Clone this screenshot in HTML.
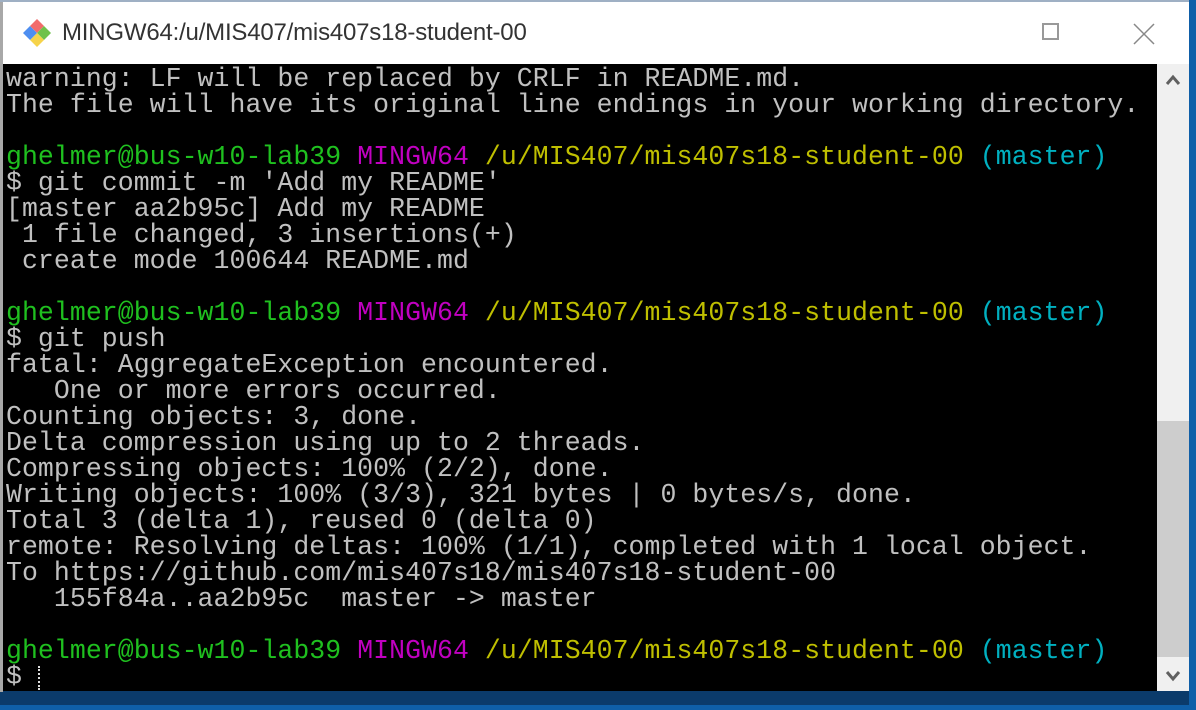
<!DOCTYPE html>
<html><head><meta charset="utf-8"><style>
html,body{margin:0;padding:0;width:1196px;height:710px;overflow:hidden;background:#fff;}
#win{position:absolute;left:0;top:0;width:1196px;height:710px;background:#0b3b6b;}
#lb{position:absolute;left:0;top:0;width:3px;height:692px;background:#a8a8a8;}
#tb{position:absolute;left:0;top:0;width:1190px;height:2px;background:#9fb0c4;}
#rb{position:absolute;left:1189px;top:0;width:7px;height:710px;background:#0f5fa8;}
#bb{position:absolute;left:0;top:705px;width:1196px;height:5px;background:#0f5fa8;}
#title{position:absolute;left:3px;top:2px;width:1186px;height:62px;background:#fff;}
#title .t{position:absolute;left:59px;top:17px;font:24px "Liberation Sans",sans-serif;color:#333;letter-spacing:-0.2px;}
#term{position:absolute;left:3px;top:64px;width:1154px;height:627px;background:#000;}
pre{margin:0;position:absolute;left:3px;top:2px;font:26.5px/26px "Liberation Mono",monospace;color:#c0c0c0;letter-spacing:0.06px;}
.g{color:#1fc01f}.m{color:#c000c0}.y{color:#bfbf00}.c{color:#00b0c0}
#sb{position:absolute;left:1157px;top:64px;width:32px;height:627px;background:#f0f0f0;}
#thumb{position:absolute;left:1157px;top:421px;width:32px;height:236px;background:#cdcdcd;}
</style></head><body><div id="win">
<div id="title">
<svg style="position:absolute;left:18px;top:14px" width="32" height="32" viewBox="0 0 32 32">
<polygon points="16,3 23,10 16,17 9,10" fill="#f26b6b"/>
<polygon points="23,10 30,17 23,24 16,17" fill="#6fc24a"/>
<polygon points="16,17 23,24 16,31 9,24" fill="#f6d34a"/>
<polygon points="9,10 16,17 9,24 2,17" fill="#4e8ef0"/>
</svg>
<div class="t">MINGW64:/u/MIS407/mis407s18-student-00</div>
<div style="position:absolute;left:1039px;top:21px;width:17px;height:17px;border:2px solid #999;box-sizing:border-box"></div>
<svg style="position:absolute;left:1130px;top:21px" width="22" height="22" viewBox="0 0 22 22"><path d="M1 1L21 21M21 1L1 21" stroke="#888" stroke-width="1.5"/></svg>
</div>
<div id="term"><pre>warning: LF will be replaced by CRLF in README.md.
The file will have its original line endings in your working directory.

<span class="g">ghelmer@bus-w10-lab39</span> <span class="m">MINGW64</span> <span class="y">/u/MIS407/mis407s18-student-00</span> <span class="c">(master)</span>
$ git commit -m 'Add my README'
[master aa2b95c] Add my README
 1 file changed, 3 insertions(+)
 create mode 100644 README.md

<span class="g">ghelmer@bus-w10-lab39</span> <span class="m">MINGW64</span> <span class="y">/u/MIS407/mis407s18-student-00</span> <span class="c">(master)</span>
$ git push
fatal: AggregateException encountered.
   One or more errors occurred.
Counting objects: 3, done.
Delta compression using up to 2 threads.
Compressing objects: 100% (2/2), done.
Writing objects: 100% (3/3), 321 bytes | 0 bytes/s, done.
Total 3 (delta 1), reused 0 (delta 0)
remote: Resolving deltas: 100% (1/1), completed with 1 local object.
To https://github.com/mis407s18/mis407s18-student-00
   155f84a..aa2b95c  master -&gt; master

<span class="g">ghelmer@bus-w10-lab39</span> <span class="m">MINGW64</span> <span class="y">/u/MIS407/mis407s18-student-00</span> <span class="c">(master)</span>
$ </pre>
<div style="position:absolute;left:35px;top:602px;width:0;height:24px;border-left:2px dotted #ddd"></div>
</div>
<div id="sb"></div><div id="thumb"></div>
<svg style="position:absolute;left:1165px;top:74px" width="16" height="12" viewBox="0 0 16 12"><path d="M2 10L8 3L14 10" stroke="#606060" stroke-width="3" fill="none"/></svg>
<svg style="position:absolute;left:1165px;top:670px" width="16" height="12" viewBox="0 0 16 12"><path d="M2 2L8 9L14 2" stroke="#606060" stroke-width="3" fill="none"/></svg>
<div id="lb"></div><div id="tb"></div><div id="rb"></div><div id="bb"></div>
</div></body></html>
